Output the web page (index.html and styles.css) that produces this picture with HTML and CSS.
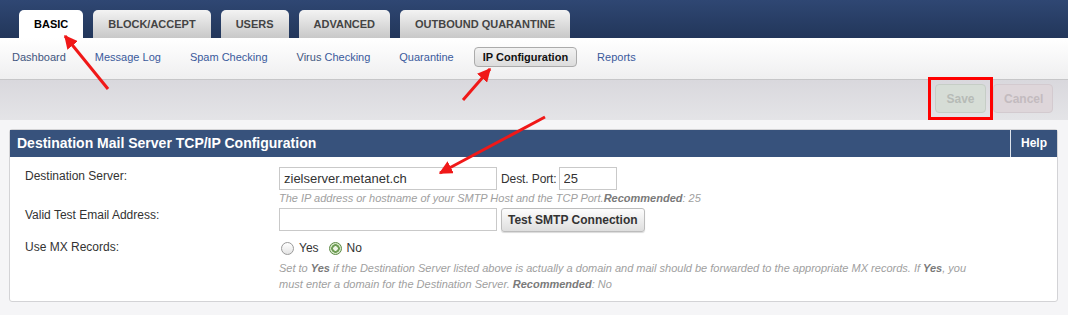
FILE: index.html
```html
<!DOCTYPE html>
<html>
<head>
  <title>IP Configuration</title>
  <link rel="stylesheet" href="styles.css">
</head>
<body>
  <div class="topbar">
    <a class="tab active" href="#">BASIC</a>
    <a class="tab" href="#">BLOCK/ACCEPT</a>
    <a class="tab" href="#">USERS</a>
    <a class="tab" href="#">ADVANCED</a>
    <a class="tab" href="#">OUTBOUND QUARANTINE</a>
  </div>

  <div class="subnav">
    <a class="subdark" href="#">Dashboard</a>
    <a href="#">Message Log</a>
    <a href="#">Spam Checking</a>
    <a class="subdark" href="#">Virus <span class="sublink">Checking</span></a>
    <a href="#">Quarantine</a>
    <a class="current" href="#">IP Configuration</a>
    <a href="#">Reports</a>
  </div>

  <div class="toolbar">
    <button class="btn-save">Save</button>
    <button class="btn-cancel">Cancel</button>
  </div>

  <div class="content">
    <div class="panel">
      <div class="panel-head">
        <div class="panel-title">Destination Mail Server TCP/IP Configuration</div>
        <div class="panel-help">Help</div>
      </div>
      <div class="panel-body">
        <div class="row">
          <label class="lbl">Destination Server:</label>
          <div class="val">
            <div class="line">
              <input class="txt" type="text" value="zielserver.metanet.ch" />
              <span class="port-lbl">Dest. Port:</span>
              <input class="txt port" type="text" value="25" />
            </div>
            <div class="hint">The IP address or hostname of your SMTP Host and the TCP Port.<b>Recommended</b>: 25</div>
          </div>
        </div>
        <div class="row row2">
          <label class="lbl">Valid Test Email Address:</label>
          <div class="val">
            <div class="line">
              <input class="txt" type="text" />
              <button class="btn-test">Test SMTP Connection</button>
            </div>
          </div>
        </div>
        <div class="row row3">
          <label class="lbl">Use MX Records:</label>
          <div class="val">
            <div class="radios">
              <label><input type="radio" name="mx" /> Yes</label>
              <label><input type="radio" name="mx" checked /> No</label>
            </div>
            <div class="hint hint-wide">Set to <b>Yes</b> if the Destination Server listed above is actually a domain and mail should be forwarded to the appropriate MX records. If <b>Yes</b>, you must enter a domain for the Destination Server. <b>Recommended</b>: No</div>
          </div>
        </div>
      </div>
    </div>
  </div>

  <!-- screenshot annotations -->
  <svg class="marks" width="1068" height="315" viewBox="0 0 1068 315">
    <defs>
      <marker id="head" viewBox="0 0 10 10" refX="9" refY="5" markerWidth="4.5" markerHeight="4.5" orient="auto">
        <path d="M0,0 L10,5 L0,10 z" fill="#f01818" />
      </marker>
    </defs>
    <line x1="108" y1="89" x2="65" y2="36" stroke="#f01818" stroke-width="3" marker-end="url(#head)" />
    <line x1="463" y1="100" x2="490" y2="69" stroke="#f01818" stroke-width="3" marker-end="url(#head)" />
    <line x1="545" y1="117" x2="440" y2="173" stroke="#f01818" stroke-width="3" marker-end="url(#head)" />
    <rect x="929.5" y="78.5" width="62" height="40" fill="none" stroke="#ff0000" stroke-width="3" />
  </svg>
</body>
</html>
```

FILE: styles.css
```css
body { margin: 0; font-family: "Liberation Sans", Arial, sans-serif; background: #f5f5f7; color: #333; }
a { text-decoration: none; }

.topbar { height: 38px; background: linear-gradient(#2f4773, #22365a); display: flex; align-items: flex-end; gap: 10px; padding-left: 19px; box-sizing: border-box; }
.tab { height: 28px; line-height: 28px; padding: 0 15px; font-size: 11px; font-weight: bold; color: #444; background: linear-gradient(#f3f3f3, #c8c8c8); border-radius: 5px 5px 0 0; }
.tab.active { background: #fff; color: #000; }

.subnav { height: 42px; border-bottom: 1px solid #c6c6c8; background: linear-gradient(#fff, #efeff0); display: flex; align-items: center; gap: 11px; padding: 0 0 3px 3px; box-sizing: border-box; }
.subnav a { font-size: 11px; color: #3a5a9c; padding: 3px 8px; border: 1px solid transparent; }
.subnav a.subdark { color: #3f5680; }
.subnav a .sublink { color: #3a5a9c; }
.subnav a.current { color: #111; font-weight: bold; background: linear-gradient(#f2f2f2, #dcdcdc); border-color: #ababab; border-radius: 4px; }

.toolbar { height: 40px; background: linear-gradient(#d9d8dd, #e4e4e7); display: flex; justify-content: flex-end; align-items: flex-start; gap: 7px; padding: 4px 15px 0 0; box-sizing: border-box; }
.toolbar button { height: 29px; font-family: inherit; font-size: 12px; font-weight: bold; border-radius: 4px; padding: 0 10px; }
.btn-save { width: 51px; background: #d6ddd6; border: 1px solid #c6cdc6; color: #b6bbb6; }
.btn-cancel { width: 60px; background: #ded6da; border: 1px solid #d3cacf; color: #c3bbbf; }

.content { padding: 9px 10px 0 9px; }
.panel { background: #fff; border: 1px solid #d3d3d6; border-radius: 3px; }
.panel-head { height: 27px; background: #37527c; display: flex; color: #fff; font-weight: bold; }
.panel-title { flex: 1; font-size: 14px; line-height: 27px; padding-left: 7px; }
.panel-help { width: 46px; border-left: 1px solid #dde3ec; font-size: 12px; line-height: 27px; text-align: center; }

.panel-body { padding: 10px 15px 9px 15px; }
.row { display: grid; grid-template-columns: 254px 1fr; }
.lbl { font-size: 12px; line-height: 14px; padding-top: 2px; color: #333; }
.row2 { margin-top: 1px; }
.row2 .lbl { padding-top: 1px; }
.row3 { margin-top: 8px; }
.row3 .lbl { padding-top: 0; }

.line { display: flex; align-items: center; }
.txt { width: 218px; height: 23px; box-sizing: border-box; border: 1px solid #c9c9c9; padding: 0 4px; font-family: inherit; font-size: 13px; color: #333; margin: 0; }
.txt.port { width: 58px; }
.port-lbl { font-size: 12px; margin: 0 2px 0 4px; letter-spacing: -0.1px; }
.btn-test { height: 24px; margin: 1px 0 0 4px; padding: 0 6px; font-family: inherit; font-size: 12px; font-weight: bold; color: #333; background: linear-gradient(#fdfdfd, #dedede); border: 1px solid #bcbcbc; border-radius: 3px; box-shadow: 0 1px 1px rgba(0,0,0,0.15); }

.hint { font-size: 11px; line-height: 16px; font-style: italic; color: #a0a0a0; }
.hint b { color: #7a7a7a; }
.hint-wide { max-width: 690px; margin-top: 4px; }

.radios { display: flex; gap: 10px; font-size: 12px; line-height: 16px; padding-left: 2px; }
.radios label { display: flex; align-items: center; gap: 5px; }
.radios input { appearance: none; -webkit-appearance: none; margin: 0; width: 13px; height: 13px; border-radius: 50%; border: 1px solid #9a9a9a; background: linear-gradient(#fff, #e4e4e4); }
.radios input:checked { border-color: #5d8a44; background: radial-gradient(circle, #eef5e6 0 2px, #6f9d55 2.5px 4px, #d6e8c8 4.5px); }

.marks { position: absolute; left: 0; top: 0; pointer-events: none; }
```
